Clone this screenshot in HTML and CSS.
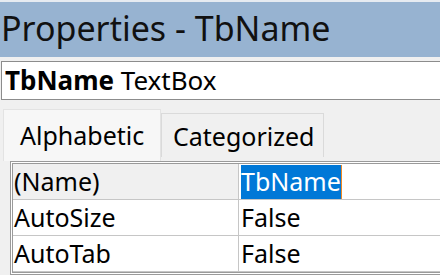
FILE: index.html
```html
<!DOCTYPE html>
<html>
<head>
<meta charset="utf-8">
<link rel="stylesheet" href="styles.css">
</head>
<body>
<div class="title">Properties - TbName</div>
<div class="combo"><b>TbName</b> TextBox</div>
<div class="tabs">
  <div class="tab active">Alphabetic</div>
  <div class="tab">Categorized</div>
</div>
<div class="grid">
  <div class="row first">
    <div class="name">(Name)</div>
    <div class="value"><span class="sel">TbName</span><span class="caret"></span></div>
  </div>
  <div class="row">
    <div class="name">AutoSize</div>
    <div class="value">False</div>
  </div>
  <div class="row">
    <div class="name">AutoTab</div>
    <div class="value">False</div>
  </div>
</div>
</body>
</html>
```
FILE: styles.css
```css
html, body {
  margin: 0;
  padding: 0;
}
body {
  width: 440px;
  height: 275px;
  overflow: hidden;
  background: #f0f0f0;
  font-family: "Noto Sans", "Open Sans", sans-serif;
  font-size: 25px;
  color: #000;
}
.title {
  border-top: 2px solid #e6ebf1;
  height: 55px;
  background: #97b3d1;
  padding-left: 1px;
  line-height: 52px;
  font-size: 34px;
  color: #111;
  white-space: nowrap;
}
.combo {
  margin-top: 4px;
  margin-left: 1px;
  height: 37px;
  border-top: 1px solid #8c8c8c;
  border-bottom: 1px solid #8c8c8c;
  border-left: 1px solid #8c8c8c;
  background: #fff;
  line-height: 37px;
  padding-left: 3px;
  font-size: 26px;
  white-space: nowrap;
}
.combo b {
  font-weight: 700;
}
.tabs {
  display: flex;
  align-items: flex-end;
  height: 61px;
  padding-left: 3px;
}
.tab {
  box-sizing: border-box;
  height: 44px;
  width: 163px;
  margin-bottom: 4px;
  border: 1px solid #dadada;
  border-bottom: none;
  background: #f0f0f0;
  line-height: 44px;
  padding-left: 11px;
  white-space: nowrap;
}
.tab.active {
  width: 158px;
  height: 52px;
  margin-bottom: 0;
  background: #f7f7f7;
  border-color: #e3e3e3;
  line-height: 50px;
  padding-left: 16px;
}
.grid {
  margin-left: 10px;
  border: 3px double #9a9a9a;
  border-right: none;
  background: #fff;
}
.row {
  display: flex;
  height: 35px;
  border-bottom: 1px solid #c6c6c6;
}
.name {
  width: 224px;
  border-right: 1px solid #c6c6c6;
  padding-left: 1px;
  line-height: 35px;
  white-space: nowrap;
}
.row.first .name {
  background: #f0f0f0;
}
.value {
  flex: 1;
  padding-left: 2px;
  line-height: 35px;
  display: flex;
  align-items: stretch;
  white-space: nowrap;
}
.sel {
  background: #0078d7;
  color: #fff;
  margin: 1px 0 0 0;
  line-height: 33px;
}
.caret {
  width: 1px;
  background: #f08a24;
  margin-top: 1px;
}
```
